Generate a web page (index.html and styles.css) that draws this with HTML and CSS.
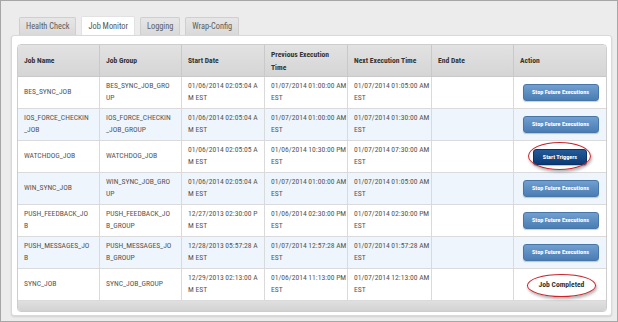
FILE: index.html
```html
<!DOCTYPE html>
<html>
<head>
<meta charset="utf-8">
<link rel="stylesheet" href="styles.css">
</head>
<body>
<div class="frame">
  <div class="tabs">
    <div class="tab">Health Check</div>
    <div class="tab active">Job Monitor</div>
    <div class="tab">Logging</div>
    <div class="tab">Wrap-Config</div>
  </div>
  <div class="panel">
    <div class="grid-wrap">
      <table class="grid">
        <colgroup>
          <col class="c1"><col class="c2"><col class="c3"><col class="c4"><col class="c5"><col class="c6"><col class="c7">
        </colgroup>
        <thead>
          <tr>
            <th>Job Name</th>
            <th>Job Group</th>
            <th>Start Date</th>
            <th>Previous Execution<br>Time</th>
            <th>Next Execution Time</th>
            <th>End Date</th>
            <th>Action</th>
          </tr>
        </thead>
        <tbody>
          <tr>
            <td>BES_SYNC_JOB</td>
            <td>BES_SYNC_JOB_GRO<br>UP</td>
            <td>01/06/2014 02:05:04 A<br>M EST</td>
            <td>01/07/2014 01:00:00 AM<br>EST</td>
            <td>01/07/2014 01:05:00 AM<br>EST</td>
            <td></td>
            <td class="act"><span class="btn stop">Stop Future Executions</span></td>
          </tr>
          <tr class="alt">
            <td>IOS_FORCE_CHECKIN<br>_JOB</td>
            <td>IOS_FORCE_CHECKIN<br>_JOB_GROUP</td>
            <td>01/06/2014 02:05:04 A<br>M EST</td>
            <td>01/07/2014 01:00:00 AM<br>EST</td>
            <td>01/07/2014 01:30:00 AM<br>EST</td>
            <td></td>
            <td class="act"><span class="btn stop">Stop Future Executions</span></td>
          </tr>
          <tr>
            <td>WATCHDOG_JOB</td>
            <td>WATCHDOG_JOB</td>
            <td>01/06/2014 02:05:05 A<br>M EST</td>
            <td>01/06/2014 10:30:00 PM<br>EST</td>
            <td>01/07/2014 07:30:00 AM<br>EST</td>
            <td></td>
            <td class="act"><span class="circled"><span class="btn start">Start Triggers</span></span></td>
          </tr>
          <tr class="alt">
            <td>WIN_SYNC_JOB</td>
            <td>WIN_SYNC_JOB_GRO<br>UP</td>
            <td>01/06/2014 02:05:04 A<br>M EST</td>
            <td>01/07/2014 01:00:00 AM<br>EST</td>
            <td>01/07/2014 01:05:00 AM<br>EST</td>
            <td></td>
            <td class="act"><span class="btn stop">Stop Future Executions</span></td>
          </tr>
          <tr>
            <td>PUSH_FEEDBACK_JO<br>B</td>
            <td>PUSH_FEEDBACK_JO<br>B_GROUP</td>
            <td>12/27/2013 02:30:00 P<br>M EST</td>
            <td>01/06/2014 02:30:00 PM<br>EST</td>
            <td>01/07/2014 02:30:00 PM<br>EST</td>
            <td></td>
            <td class="act"><span class="btn stop">Stop Future Executions</span></td>
          </tr>
          <tr class="alt">
            <td>PUSH_MESSAGES_JO<br>B</td>
            <td>PUSH_MESSAGES_JO<br>B_GROUP</td>
            <td>12/28/2013 05:57:28 A<br>M EST</td>
            <td>01/07/2014 12:57:28 AM<br>EST</td>
            <td>01/07/2014 01:57:28 AM<br>EST</td>
            <td></td>
            <td class="act"><span class="btn stop">Stop Future Executions</span></td>
          </tr>
          <tr>
            <td>SYNC_JOB</td>
            <td>SYNC_JOB_GROUP</td>
            <td>12/29/2013 02:13:00 A<br>M EST</td>
            <td>01/06/2014 11:13:00 PM<br>EST</td>
            <td>01/07/2014 12:13:00 AM<br>EST</td>
            <td></td>
            <td class="act"><span class="circled done">Job Completed</span></td>
          </tr>
        </tbody>
      </table>
      <div class="grid-foot"></div>
    </div>
  </div>
</div>
</body>
</html>
```

FILE: styles.css
```css
html, body {
  margin: 0;
  padding: 0;
}

body {
  font-family: "Roboto Condensed", Roboto, "Liberation Sans", Arial, sans-serif;
  font-stretch: 75%;
  width: 618px;
  height: 322px;
  overflow: hidden;
}

.frame {
  box-sizing: border-box;
  width: 618px;
  height: 322px;
  border: 1px solid #a6a6a6;
  background: #ececec;
  padding: 15px 5px 5px 10px;
  display: flex;
  flex-direction: column;
}

.tabs {
  display: flex;
  align-items: flex-end;
  gap: 5px;
  margin-left: 8px;
  height: 19px;
  flex: none;
}

.tab {
  box-sizing: border-box;
  height: 18px;
  line-height: 17px;
  padding: 0 6px;
  font-size: 8.3px;
  color: #5c5c5c;
  background: linear-gradient(#e6e6e6, #d9d9d9);
  border: 1px solid #cfcfcf;
  border-bottom: none;
  border-radius: 2px 2px 0 0;
}

.tab.active {
  height: 19px;
  line-height: 19px;
  background: #fff;
  border-color: #e2e2e2;
  color: #555;
}

.panel {
  flex: none;
  height: 281px;
  box-sizing: border-box;
  background: #fff;
  border: 1px solid #d9d9d9;
  border-radius: 3px;
  padding: 8px 4px 3px 5px;
  box-shadow: 0 1px 2px rgba(0, 0, 0, 0.12);
}

.grid-wrap {
  border: 1px solid #cdcdcd;
  border-radius: 4px;
  overflow: hidden;
}

.grid {
  width: 588px;
  table-layout: fixed;
  border-collapse: separate;
  border-spacing: 0;
}

.c1 { width: 82px; }
.c2 { width: 82px; }
.c3 { width: 83px; }
.c4 { width: 83px; }
.c5 { width: 84px; }
.c6 { width: 82px; }
.c7 { width: 92px; }

.grid th,
.grid td {
  box-sizing: border-box;
  height: 32px;
  padding: 0 3px 2px 6px;
  border-right: 1px solid #dadada;
  border-bottom: 1px solid #dadada;
  text-align: left;
  vertical-align: middle;
  font-size: 7.6px;
  line-height: 12px;
  white-space: nowrap;
  overflow: hidden;
}

.grid th:last-child,
.grid td:last-child {
  border-right: none;
}

.grid th {
  background: linear-gradient(#e2e2e2, #d5d5d5);
  color: #333;
  font-weight: bold;
  line-height: 13px;
  padding-bottom: 0;
  border-right-color: #c9c9c9;
  border-bottom-color: #c9c9c9;
}

.grid td {
  color: #555;
}

.grid tr.alt td {
  background: #eef5fc;
}

.grid td.act {
  text-align: center;
  padding: 0;
  overflow: visible;
}

.btn {
  display: inline-block;
  box-sizing: border-box;
  height: 17px;
  line-height: 15px;
  border-radius: 3px;
  color: #fff;
  font-size: 6.2px;
  font-weight: bold;
  white-space: nowrap;
  vertical-align: middle;
}

.btn.stop {
  width: 76px;
  background: linear-gradient(#709fcf, #4b7db4);
  border: 1px solid #4876a8;
  box-shadow: 0 1px 1px rgba(0, 0, 0, 0.2);
  margin-left: 1px;
}

.btn.start {
  width: 54px;
  height: 16px;
  line-height: 14px;
  background: linear-gradient(#245a98, #0b3b77);
  border: 1px solid #0a3468;
  box-shadow: 0 1px 1px rgba(0, 0, 0, 0.25);
}

.circled {
  position: relative;
  display: inline-block;
  vertical-align: middle;
}

.circled::after {
  content: "";
  position: absolute;
  top: -7px;
  bottom: -5px;
  left: -5px;
  right: -4px;
  border: 1.5px solid #c9262c;
  border-radius: 50%;
  box-shadow: 1px 2px 3px rgba(0, 0, 0, 0.3);
}

.circled.done {
  color: #333;
  font-weight: bold;
  font-size: 7.6px;
  line-height: 12px;
  padding: 0 12px;
  margin-left: 3px;
}

.circled.done::after {
  top: -5px;
  bottom: -6px;
  left: 0;
  right: 0;
}

.grid-foot {
  height: 10px;
  background: linear-gradient(#e0e0e0, #d2d2d2);
}
```
